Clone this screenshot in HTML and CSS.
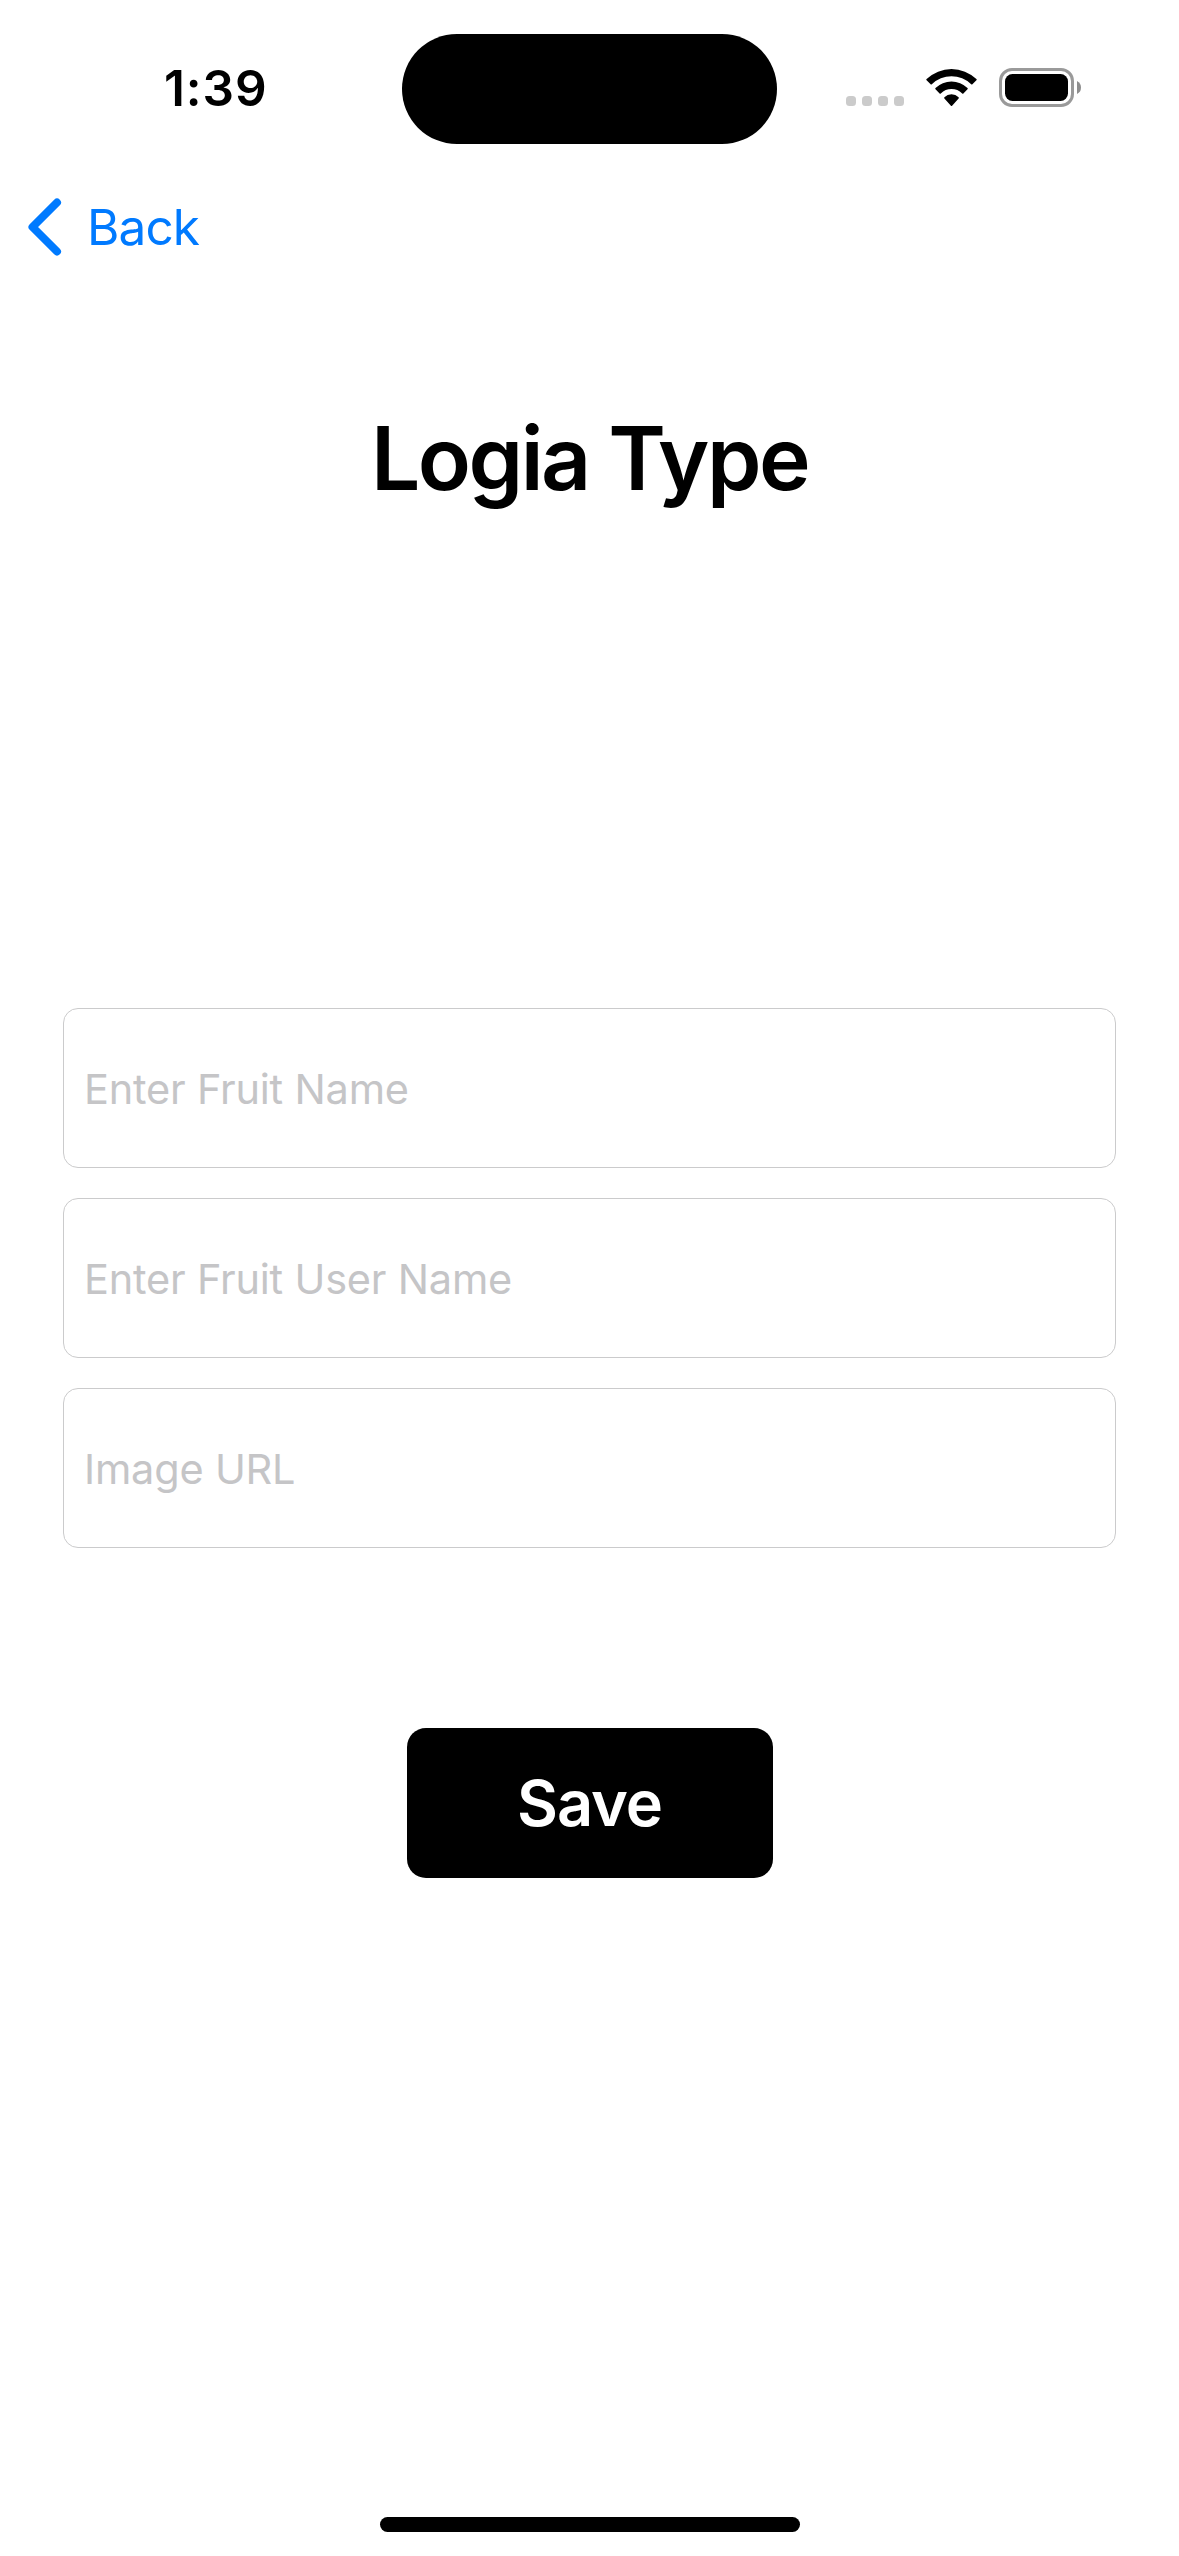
FILE: index.html
```html
<!DOCTYPE html>
<html lang="en">
<head>
<meta charset="utf-8">
<title>Logia Type</title>
<link rel="stylesheet" href="styles.css">
</head>
<body>
<div class="screen">
  <header class="status-bar">
    <div class="time">1:39</div>
    <div class="island"></div>
    <div class="indicators">
      <svg class="signal" width="58" height="10" viewBox="0 0 58 10" fill="#cbcbcb">
        <rect x="0" width="10" height="10" rx="3.5"/>
        <rect x="16" width="10" height="10" rx="3.5"/>
        <rect x="32" width="10" height="10" rx="3.5"/>
        <rect x="48" width="10" height="10" rx="3.5"/>
      </svg>
      <svg class="wifi" width="51" height="38" viewBox="0 0 51 38">
        <path d="M.6 10.1A36 36 0 0 1 50.4 10.1Q51 10.7 50.4 11.3L46.400 15.300Q45.800 15.900 45.200 15.300A28.200 28.200 0 0 0 5.800 15.300Q5.200 15.900 4.600 15.300L.6 11.300Q0 10.700 .6 10.100Z"/>
        <path d="M9.500 19.100A22.900 22.900 0 0 1 41.500 19.100Q42.100 19.700 41.500 20.300L37.400 24.400Q36.800 25 36.200 24.400A15.400 15.400 0 0 0 14.800 24.400Q14.200 25 13.600 24.400L9.500 20.300Q8.900 19.700 9.500 19.100Z"/>
        <path d="M18.400 28.200A10 10 0 0 1 32.600 28.200Q33.200 28.900 32.600 29.500L26.100 36.800Q25.500 37.400 24.900 36.800L18.400 29.500Q17.800 28.900 18.400 28.200Z"/>
      </svg>
      <svg class="battery" width="82" height="39" viewBox="0 0 82 39">
        <rect x="1.500" y="1.500" width="72" height="36" rx="11.500" fill="none" stroke="#9a9a9a" stroke-width="3"/>
        <rect x="6" y="6" width="63" height="27" rx="7.500"/>
        <path d="M78 13Q82 15 82 19.500Q82 24 78 26Z" fill="#8e8e8e"/>
      </svg>
    </div>
  </header>
  <nav class="nav-bar">
    <a class="back">
      <svg width="34" height="58" viewBox="0 0 34 58" fill="none" stroke="#007aff" stroke-width="8" stroke-linecap="round" stroke-linejoin="round">
        <path d="M29 4.500L4.500 29L29 53.500"/>
      </svg>
      <span class="back-label">Back</span>
    </a>
  </nav>
  <h1 class="title">Logia Type</h1>
  <form class="form">
    <input class="field" type="text" placeholder="Enter Fruit Name">
    <input class="field" type="text" placeholder="Enter Fruit User Name">
    <input class="field" type="text" placeholder="Image URL">
    <button class="save" type="button">Save</button>
  </form>
  <div class="home-indicator"></div>
</div>
</body>
</html>
```
FILE: styles.css
```css
* { box-sizing: border-box; }
body {
  margin: 0;
  background: #fff;
  color: #000;
  font-family: Inter, "Liberation Sans", sans-serif;
}
.screen {
  width: 1179px;
  height: 2556px;
  display: flex;
  flex-direction: column;
  align-items: center;
  overflow: hidden;
}
.status-bar {
  width: 100%;
  height: 177px;
  padding-top: 33.500px;
  display: grid;
  grid-template-columns: 401.700px 375.800px 1fr;
  align-items: start;
}
.time {
  padding: 24.500px 0 0 164px;
  font-size: 49.500px;
  line-height: 60px;
  font-weight: 600;
  letter-spacing: 0.900px;
}
.island {
  height: 110.500px;
  border-radius: 55.250px;
  background: #000;
}
.indicators {
  display: flex;
  align-items: flex-start;
  padding: 34.500px 0 0 68.500px;
}
.signal { margin-top: 28px; }
.wifi { margin: 1px 0 0 22px; }
.battery { margin-left: 22px; }
.nav-bar {
  width: 100%;
  height: 100px;
  padding: 21px 0 0 28px;
}
.back {
  display: flex;
  align-items: center;
  gap: 25px;
  height: 58px;
  color: #007aff;
  font-size: 49.500px;
  line-height: 58px;
}
.back-label { letter-spacing: -0.900px; }
.title {
  margin: 128px 0 0;
  font-size: 87.400px;
  line-height: 106px;
  font-weight: 600;
  letter-spacing: -2.500px;
}
.form {
  width: 1053px;
  margin-top: 497px;
  display: flex;
  flex-direction: column;
  align-items: center;
  gap: 30px;
}
.field {
  width: 100%;
  height: 160px;
  padding: 1px 0 0 20px;
  border: 1px solid #cbcbcc;
  border-radius: 15px;
  background: #fff;
  font: 400 41.500px Inter, "Liberation Sans", sans-serif;
  letter-spacing: -0.200px;
}
.field::placeholder { color: #c5c5c7; opacity: 1; }
.save {
  width: 366px;
  height: 150px;
  margin-top: 150px;
  padding: 0;
  border: 0;
  border-radius: 19px;
  background: #000;
  color: #fff;
  font: 600 63px Inter, "Liberation Sans", sans-serif;
  letter-spacing: -1px;
}
.home-indicator {
  width: 420px;
  height: 15px;
  margin: auto 0 24px;
  border-radius: 7.500px;
  background: #000;
}
```
